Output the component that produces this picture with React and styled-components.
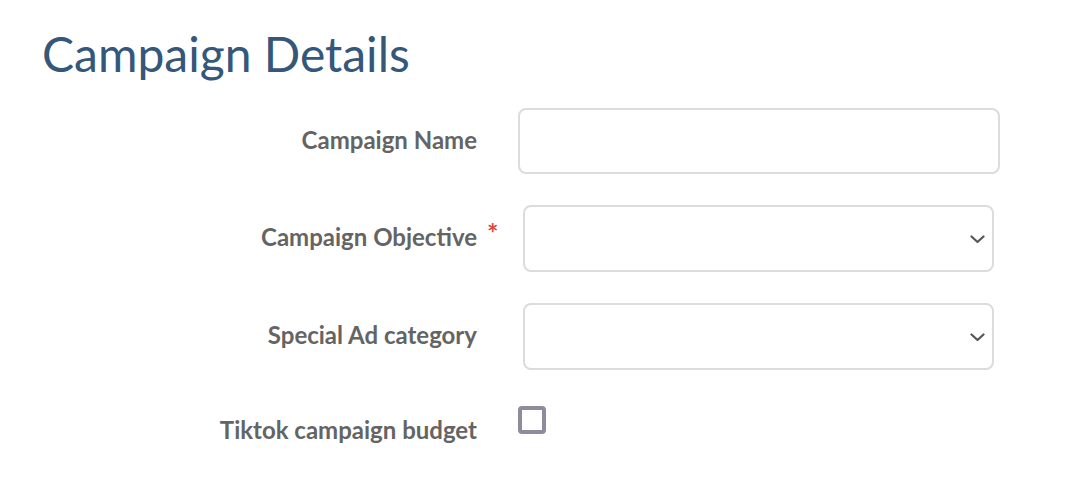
import React from 'react'
import styled, { createGlobalStyle } from 'styled-components'

const HEADING_COLOR = '#34577a'
const LABEL_COLOR = '#646464'
const BORDER_COLOR = '#dcdcdc'
const REQUIRED_COLOR = '#e2483b'

const GlobalStyle = createGlobalStyle`
  html, body {
    margin: 0;
    padding: 0;
    background: #ffffff;
    font-family: Lato, "Open Sans", sans-serif;
  }
`

const Page = styled.div`
  width: 1088px;
  height: 480px;
  overflow: hidden;
  box-sizing: border-box;
  padding-top: 22px;
`

const Title = styled.h1`
  margin: 0 0 0 42px;
  font-family: Lato, sans-serif;
  font-weight: 400;
  font-size: 48px;
  line-height: 64px;
  color: ${HEADING_COLOR};
`

const Form = styled.form`
  display: flex;
  flex-direction: column;
  gap: 31px;
  margin-top: 22px;
`

const Row = styled.div`
  display: flex;
  align-items: ${p => (p.$top ? 'flex-start' : 'center')};
  min-height: ${p => (p.$top ? 'auto' : '66px')};
`

const Label = styled.label`
  width: 477px;
  flex: none;
  text-align: right;
  font-weight: 700;
  font-size: 24px;
  line-height: 30px;
  color: ${LABEL_COLOR};
  margin-top: -3px;
  padding-top: ${p => p.$offset || 0}px;
`

const Required = styled.span`
  box-sizing: border-box;
  width: 20px;
  flex: none;
  align-self: flex-start;
  padding-top: 14px;
  padding-left: 10px;
  font-size: 27px;
  font-weight: 700;
  line-height: 1;
  color: ${REQUIRED_COLOR};
`

const TextInput = styled.input`
  box-sizing: border-box;
  width: 482px;
  height: 66px;
  margin-left: ${p => p.$indent}px;
  border: 2px solid ${BORDER_COLOR};
  border-radius: 8px;
  font-family: inherit;
  font-size: 20px;
  padding: 0 16px;
  outline: none;
`

const SelectWrap = styled.div`
  position: relative;
  margin-left: ${p => p.$indent}px;
  svg {
    position: absolute;
    right: 9px;
    top: 30px;
    pointer-events: none;
  }
`

const Select = styled.select`
  appearance: none;
  box-sizing: border-box;
  width: 471px;
  height: 67px;
  border: 2px solid ${BORDER_COLOR};
  border-radius: 8px;
  background: #ffffff;
  font-family: inherit;
  font-size: 20px;
  padding: 0 16px;
  outline: none;
`

const Checkbox = styled.span`
  box-sizing: border-box;
  display: block;
  width: 28px;
  height: 28px;
  margin-top: 5px;
  margin-left: ${p => p.$indent}px;
  border: 4px solid #8e8b9c;
  border-radius: 4px;
`

function Chevron() {
  return (
    <svg width="15" height="9" viewBox="0 0 15 9">
      <path d="M1.5 1.5 L7.5 7 L13.5 1.5" fill="none" stroke="#555" strokeWidth="2.2" strokeLinecap="round" strokeLinejoin="round" />
    </svg>
  )
}

function SelectField({ label, required }) {
  return (
    <Row>
      <Label>{label}</Label>
      {required ? <Required>*</Required> : <Required />}
      <SelectWrap $indent={26}>
        <Select defaultValue="">
          <option value="" />
        </Select>
        <Chevron />
      </SelectWrap>
    </Row>
  )
}

export default function App() {
  return (
    <Page>
      <GlobalStyle />
      <Title>Campaign Details</Title>
      <Form>
        <Row>
          <Label>Campaign Name</Label>
          <Required />
          <TextInput type="text" $indent={21} />
        </Row>
        <SelectField label="Campaign Objective" required />
        <SelectField label="Special Ad category" />
        <Row $top>
          <Label $offset={17}>Tiktok campaign budget</Label>
          <Required />
          <Checkbox $indent={21} />
        </Row>
      </Form>
    </Page>
  )
}
